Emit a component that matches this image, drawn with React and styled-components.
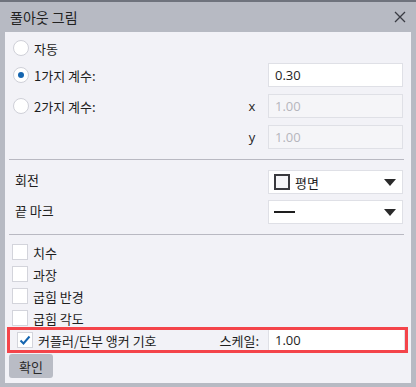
import React, { useState } from 'react';
import styled, { createGlobalStyle } from 'styled-components';

const GlobalStyle = createGlobalStyle`
  * { box-sizing: border-box; }
  html, body { margin: 0; padding: 0; background: #b7bac3; }
  body {
    font-family: "Noto Sans CJK KR", "Noto Sans", sans-serif;
    font-size: 13px;
    color: #1e1e1e;
  }
`;

const Frame = styled.div`
  width: 416px;
  height: 387px;
  display: flex;
  flex-direction: column;
  background: #b7bac3;
  border-top: 2px solid #6f737d;
  padding: 0 5px 4px 5px;
`;

const TitleBar = styled.div`
  height: 30px;
  display: flex;
  align-items: center;
  justify-content: space-between;
  padding: 0 4px 0 5px;
  font-size: 14px;
  color: #222;
`;

const CloseButton = styled.button`
  width: 14px;
  height: 14px;
  padding: 0;
  border: none;
  background: none;
  display: flex;
  align-items: center;
  justify-content: center;
`;

const Body = styled.div`
  flex: 1;
  background: #f2f2f7;
  padding: 4px 8px 0 2px;
  display: flex;
  flex-direction: column;
`;

const Row = styled.div`
  height: ${p => p.$h || 24}px;
  margin-top: ${p => p.$top || 0}px;
  display: flex;
  align-items: center;
`;

const RadioLabel = styled.label`
  display: flex;
  align-items: center;
  gap: 5px;
  padding-left: 6px;
  flex: 1;
  cursor: pointer;
`;

const RadioCircle = styled.span`
  width: 16px;
  height: 16px;
  border-radius: 50%;
  background: #fff;
  border: 1px solid #cfd0d8;
  display: flex;
  align-items: center;
  justify-content: center;
  &::after {
    content: '';
    width: 6px;
    height: 6px;
    border-radius: 50%;
    background: ${p => (p.$on ? '#1565b0' : 'transparent')};
  }
`;

const FieldLabel = styled.span`
  flex: 1;
  padding-left: 8px;
  padding-bottom: ${p => p.$lift || 0}px;
`;

const Axis = styled.span`
  width: 14px;
  margin-right: 9px;
  font-size: 13px;
  font-family: "Open Sans", "Noto Sans", sans-serif;
  text-align: center;
`;

const TextInput = styled.input`
  width: 135px;
  height: 24px;
  border: 1px solid #dfe0e6;
  background: ${p => (p.disabled ? '#f5f5f8' : '#fff')};
  color: ${p => (p.disabled ? '#b5b6bd' : '#1e1e1e')};
  font-family: "Open Sans", "Noto Sans", sans-serif;
  font-size: 13px;
  padding: 0 0 0 6px;
  outline: none;
`;

const Separator = styled.div`
  height: 1px;
  background: #b9b9c2;
  margin: ${p => p.$top}px -1px 0 2px;
`;

const Select = styled.div`
  width: 135px;
  height: 24px;
  border: 1px solid #dfe0e6;
  background: #fff;
  display: flex;
  align-items: center;
  padding: 0 4px 0 5px;
  gap: 5px;
`;

const SelectValue = styled.span`
  flex: 1;
  display: flex;
  align-items: center;
  gap: 5px;
`;

const PlaneIcon = styled.span`
  width: 16px;
  height: 16px;
  border: 2px solid #3a3a3e;
  background: #f6f6f8;
`;

const LineIcon = styled.span`
  width: 21px;
  height: 2px;
  background: #1e1e1e;
`;

const Caret = styled.span`
  width: 0;
  height: 0;
  border-left: 6px solid transparent;
  border-right: 6px solid transparent;
  border-top: 7px solid #2a2a2a;
  margin-right: 2px;
`;

const CheckLabel = styled.label`
  display: flex;
  align-items: center;
  gap: 5px;
  padding-left: 5px;
  flex: 1;
  cursor: pointer;
`;

const Box = styled.span`
  width: 16px;
  height: 16px;
  background: #fff;
  border: 1px solid #d3d4db;
  display: flex;
  align-items: center;
  justify-content: center;
`;

const Highlight = styled.div`
  height: 26px;
  margin: -2px -5px 0 0;
  border: 3px solid #f4444a;
  display: flex;
  align-items: center;
  padding-left: 2px;
`;

const ScaleLabel = styled.span`
  margin-right: 9px;
`;

const ScaleInput = styled(TextInput)`
  height: 20px;
  width: 137px;
  border: none;
  border-left: 1px solid #dfe0e6;
  border-right: 1px solid #dfe0e6;
`;

const OkButton = styled.button`
  width: 44px;
  height: 24px;
  margin: 1px 0 0 2px;
  border: none;
  border-radius: 3px;
  background: #b9bcc5;
  color: #2a2a2a;
  font-family: "Noto Sans CJK KR", sans-serif;
  font-size: 13px;
  padding: 0;
`;

const Check = () => (
  <svg width="12" height="12" viewBox="0 0 12 12">
    <path d="M1.5 6.5 L4.5 9.5 L10.5 2.5" fill="none" stroke="#1565b0" strokeWidth="2" />
  </svg>
);

function Checkbox({ label, checked }) {
  return (
    <CheckLabel>
      <Box>{checked && <Check />}</Box>
      {label}
    </CheckLabel>
  );
}

export default function App() {
  const [mode, setMode] = useState('one');
  const options = ['치수', '과장', '굽힘 반경', '굽힘 각도'];

  return (
    <>
      <GlobalStyle />
      <Frame>
        <TitleBar>
          <span>풀아웃 그림</span>
          <CloseButton aria-label="닫기">
            <svg width="12" height="12" viewBox="0 0 12 12">
              <path d="M1 1 L11 11 M11 1 L1 11" stroke="#3a3c44" strokeWidth="1.3" />
            </svg>
          </CloseButton>
        </TitleBar>
        <Body>
          <Row>
            <RadioLabel onClick={() => setMode('auto')}>
              <RadioCircle $on={mode === 'auto'} />
              자동
            </RadioLabel>
          </Row>
          <Row $top={3}>
            <RadioLabel onClick={() => setMode('one')}>
              <RadioCircle $on={mode === 'one'} />
              1가지 계수:
            </RadioLabel>
            <TextInput defaultValue="0.30" />
          </Row>
          <Row $top={7}>
            <RadioLabel onClick={() => setMode('two')}>
              <RadioCircle $on={mode === 'two'} />
              2가지 계수:
            </RadioLabel>
            <Axis>x</Axis>
            <TextInput disabled value="1.00" readOnly />
          </Row>
          <Row $top={7}>
            <FieldLabel />
            <Axis>y</Axis>
            <TextInput disabled value="1.00" readOnly />
          </Row>

          <Separator $top={10} />

          <Row $top={10}>
            <FieldLabel $lift={5}>회전</FieldLabel>
            <Select>
              <SelectValue>
                <PlaneIcon />
                평면
              </SelectValue>
              <Caret />
            </Select>
          </Row>
          <Row $top={6}>
            <FieldLabel $lift={3}>끝 마크</FieldLabel>
            <Select>
              <SelectValue>
                <LineIcon />
              </SelectValue>
              <Caret />
            </Select>
          </Row>

          <Separator $top={10} />

          {options.map((o, i) => (
            <Row key={o} $h={22} $top={i === 0 ? 6 : 0}>
              <Checkbox label={o} />
            </Row>
          ))}

          <Highlight>
            <Checkbox label="커플러/단부 앵커 기호" checked />
            <ScaleLabel>스케일:</ScaleLabel>
            <ScaleInput defaultValue="1.00" />
          </Highlight>

          <OkButton>확인</OkButton>
        </Body>
      </Frame>
    </>
  );
}
